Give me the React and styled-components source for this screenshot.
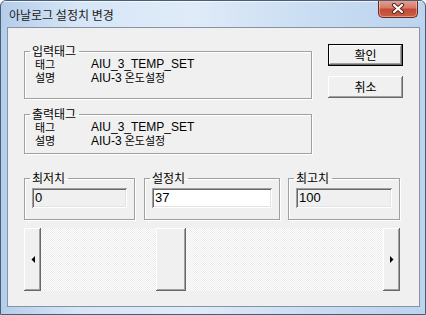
import React from 'react';
import styled, { createGlobalStyle } from 'styled-components';

const GlobalStyle = createGlobalStyle`
  html, body {
    margin: 0;
    padding: 0;
    background: #ffffff;
  }
  body {
    font-family: 'Liberation Sans', 'Noto Sans CJK KR', sans-serif;
    font-size: 12px;
    color: #000000;
  }
`;

const Window = styled.div`
  box-sizing: border-box;
  width: 426px;
  height: 315px;
  display: flex;
  flex-direction: column;
  border: 1px solid #4a5d78;
  border-radius: 6px 6px 0 0;
  background: linear-gradient(to right, #b4cde9 0%, #d6e6f7 18%, #dfebf8 45%, #c8dcf2 75%, #bcd4ee 100%);
  overflow: hidden;
`;

const TitleBar = styled.div`
  height: 26px;
  display: flex;
  align-items: flex-start;
  justify-content: space-between;
  padding-left: 8px;
  padding-right: 7px;
  box-shadow: inset 0 1px 0 rgba(255, 255, 255, 0.7);
`;

const Title = styled.span`
  margin-top: 7px;
  font-family: 'Noto Sans CJK KR', 'Liberation Sans', sans-serif;
  font-size: 12px;
  line-height: 14px;
  color: #1a1a1a;
`;

const CloseButton = styled.div`
  width: 40px;
  height: 18px;
  margin-top: -1px;
  display: flex;
  align-items: center;
  justify-content: center;
  box-sizing: border-box;
  border: 1px solid #6b2a24;
  border-top: none;
  border-radius: 0 0 5px 5px;
  background: linear-gradient(to bottom, #e7a494 0%, #d67b69 45%, #c24b38 55%, #c9603f 100%);
  box-shadow: inset 0 0 0 1px rgba(255, 220, 210, 0.45);
`;

const Client = styled.div`
  flex: 1;
  margin: 0 5px 7px 6px;
  border: 1px solid #8793a4;
  background: #f0f0f0;
  padding: 16px 0 0 16px;
  display: flex;
  flex-direction: column;
`;

const TopRow = styled.div`
  display: flex;
  gap: 16px;
`;

const TagColumn = styled.div`
  width: 288px;
  display: flex;
  flex-direction: column;
  gap: 8px;
`;

const Group = styled.fieldset`
  box-sizing: border-box;
  margin: 0;
  width: ${(p) => p.$width || 288}px;
  height: ${(p) => p.$height}px;
  padding: 0 7px 0 8px;
  border: 1px solid #a0a0a0;
  box-shadow: inset 1px 1px 0 #ffffff, 1px 1px 0 #ffffff;
  min-width: 0;
`;

const Legend = styled.legend`
  padding: 0 3px 0 2px;
  margin-left: -3px;
  font-family: 'Noto Sans CJK KR', 'Liberation Sans', sans-serif;
  font-size: 12px;
  line-height: 14px;
`;

const InfoRow = styled.div`
  display: flex;
  align-items: center;
  padding-left: 2px;
  height: 13px;
  line-height: 13px;
`;

const Key = styled.span`
  width: 56px;
  font-family: 'Noto Sans CJK KR', sans-serif;
  font-size: 11px;
`;

const Value = styled.span`
  white-space: nowrap;
  font-size: 12px;
`;

const Hangul = styled.span`
  font-family: 'Noto Sans CJK KR', sans-serif;
  font-size: 11px;
  margin-left: 3px;
`;

const ButtonColumn = styled.div`
  display: flex;
  flex-direction: column;
  gap: 10px;
`;

const PushButton = styled.button`
  box-sizing: border-box;
  width: 75px;
  height: 22px;
  padding: 0;
  margin: 0;
  font-family: 'Noto Sans CJK KR', sans-serif;
  font-size: 12px;
  line-height: 14px;
  color: #000;
  background: #f0f0f0;
  border: ${(p) => (p.$isDefault ? '1px solid #000000' : 'none')};
  box-shadow: ${(p) =>
    p.$isDefault
      ? 'inset -1px -1px #696969, inset 1px 1px #ffffff, inset -2px -2px #a0a0a0'
      : 'inset -1px -1px #696969, inset 1px 1px #ffffff, inset -2px -2px #a0a0a0, inset 2px 2px #f0f0f0'};
`;

const ValueRow = styled.div`
  display: flex;
  margin-top: 17px;
`;

const ValueGroup = styled(Group)`
  padding: 0 7px 0 7px;
  margin-left: ${(p) => p.$ml || 0}px;
  display: flex;
  flex-direction: column;
`;

const ValueLegend = styled(Legend)`
  margin-left: -2px;
`;

const Edit = styled.input`
  box-sizing: border-box;
  display: block;
  width: 100%;
  height: 20px;
  margin: 3px 0 0 0;
  padding: 0 3px 2px;
  border: none;
  outline: none;
  font-family: 'Liberation Sans', sans-serif;
  font-size: 13px;
  color: #000;
  background: ${(p) => (p.readOnly ? '#f0f0f0' : '#ffffff')};
  box-shadow: inset 1px 1px #a0a0a0, inset -1px -1px #ffffff, inset 2px 2px #696969, inset -2px -2px #e3e3e3;
`;

const ScrollBar = styled.div`
  width: 376px;
  height: 63px;
  margin-top: 8px;
  display: flex;
  background: repeating-conic-gradient(#ffffff 0 25%, #ebebeb 0 50%) 0 0 / 2px 2px;
`;

const ScrollPart = styled.div`
  box-sizing: border-box;
  width: ${(p) => p.$width}px;
  height: 100%;
  margin-left: ${(p) => p.$offset || 0}px;
  display: flex;
  align-items: center;
  justify-content: center;
  background: #f0f0f0;
  box-shadow: inset -1px -1px #696969, inset 1px 1px #ffffff, inset -2px -2px #a0a0a0, inset 2px 2px #f0f0f0;
`;

const Spacer = styled.div`
  flex: 1;
`;

function Arrow({ dir }) {
  const pts = dir === 'left' ? '4,0 4,7 0.5,3.5' : '0,0 0,7 3.5,3.5';
  return (
    <svg width="4" height="7" viewBox="0 0 4 7">
      <polygon points={pts} fill="#000" />
    </svg>
  );
}

function CloseGlyph() {
  return (
    <svg width="14" height="11" viewBox="0 0 14 11">
      <path d="M3 2 L11 9 M11 2 L3 9" stroke="#5a2620" strokeWidth="4.2" strokeLinecap="round" />
      <path d="M3 2 L11 9 M11 2 L3 9" stroke="#ffffff" strokeWidth="2.2" strokeLinecap="round" />
    </svg>
  );
}

function TagGroup({ title, tag, desc, height }) {
  return (
    <Group $height={height}>
      <Legend>{title}</Legend>
      <InfoRow>
        <Key>태그</Key>
        <Value>{tag}</Value>
      </InfoRow>
      <InfoRow>
        <Key>설명</Key>
        <Value>
          AIU-3<Hangul>{desc}</Hangul>
        </Value>
      </InfoRow>
    </Group>
  );
}

export default function App() {
  return (
    <>
      <GlobalStyle />
      <Window>
        <TitleBar>
          <Title>아날로그 설정치 변경</Title>
          <CloseButton>
            <CloseGlyph />
          </CloseButton>
        </TitleBar>
        <Client>
          <TopRow>
            <TagColumn>
              <TagGroup title="입력태그" tag="AIU_3_TEMP_SET" desc="온도설정" height={55} />
              <TagGroup title="출력태그" tag="AIU_3_TEMP_SET" desc="온도설정" height={47} />
            </TagColumn>
            <ButtonColumn>
              <PushButton $isDefault>확인</PushButton>
              <PushButton>취소</PushButton>
            </ButtonColumn>
          </TopRow>
          <ValueRow>
            <ValueGroup $width={111} $height={49}>
              <ValueLegend>최저치</ValueLegend>
              <Edit readOnly value="0" />
            </ValueGroup>
            <ValueGroup $width={136} $height={49} $ml={9}>
              <ValueLegend>설정치</ValueLegend>
              <Edit defaultValue="37" />
            </ValueGroup>
            <ValueGroup $width={112} $height={49} $ml={8}>
              <ValueLegend>최고치</ValueLegend>
              <Edit readOnly value="100" />
            </ValueGroup>
          </ValueRow>
          <ScrollBar>
            <ScrollPart $width={17}>
              <Arrow dir="left" />
            </ScrollPart>
            <ScrollPart $width={30} $offset={115} />
            <Spacer />
            <ScrollPart $width={17}>
              <Arrow dir="right" />
            </ScrollPart>
          </ScrollBar>
        </Client>
      </Window>
    </>
  );
}
